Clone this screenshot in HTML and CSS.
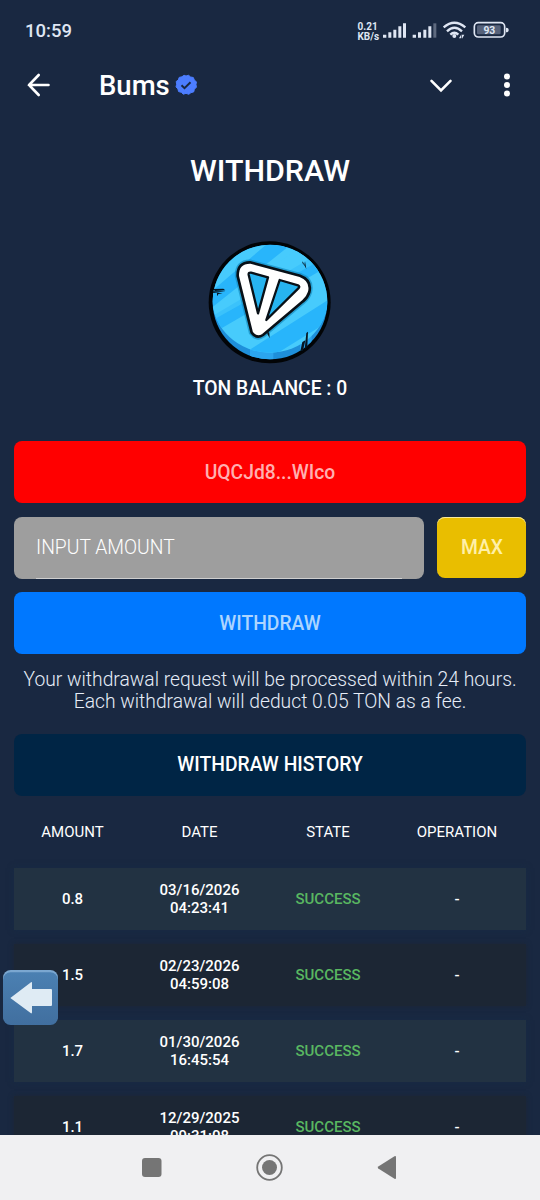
FILE: index.html
```html
<!DOCTYPE html>
<html lang="en">
<head>
<meta charset="utf-8">
<title>Bums - Withdraw</title>
<link rel="stylesheet" href="styles.css">
</head>
<body>
<div class="screen">
  <div class="status-bar">
    <span class="clock">10:59</span>
    <span class="net-speed"><span>0.21</span><span>KB/s</span></span>
    <svg class="status-icons" width="130" height="24" viewBox="0 0 390 72">
      <g fill="#dfe6f3">
        <path d="M3 44h10v9h-10zM19 37h9v16h-9zM34 29h9v24h-9zM49 19h9v34h-9zM63 10h9v43h-9z"/>
        <path d="M92 44h10v9h-10zM108 37h9v16h-9zM124 29h9v24h-9zM139 19h9v34h-9z"/>
        <path d="M154 10h9v43h-9z" opacity=".35"/>
        <circle cx="217" cy="48" r="6"/>
        <path d="M231 55l7-12v12zM240 44h7l-7 12z"/>
      </g>
      <g fill="none" stroke="#dfe6f3" stroke-width="7">
        <path d="M185 22Q217-6 250 22M195 34Q217 13 240 34M205 44Q217 32 229 44"/>
        <rect x="277" y="8" width="91" height="43" rx="12" stroke-width="5"/>
      </g>
      <rect x="285" y="16" width="71" height="27" rx="4" fill="#56627a"/>
      <path d="M372 23q8 0 8 7t-8 7z" fill="#dfe6f3"/>
      <text x="322" y="41" class="battery-level">93</text>
    </svg>
  </div>
  <header class="app-bar">
    <svg class="back" width="24" height="24" viewBox="0 0 24 24"><path d="M22.500 12H3M12.700 2L3 12l9.700 10"/></svg>
    <span class="app-name">Bums</span>
    <svg class="verified" width="22" height="22" viewBox="0 0 22 22">
      <path fill="#4c7dff" stroke="#4c7dff" stroke-width="1" stroke-linejoin="round" d="M11 2l2.600-.7 2 1.700 2.700.5 1 2.600 2.100 1.700-.4 2.800.4 2.600-2 2-.7 2.700-2.700.7-2.200 1.700-2.800-1-2.700.9-2-1.900-2.700-.7-.7-2.700-1.900-2 .7-2.700-.5-2.700L3.300 6 4.200 3.400l2.700-.6 2.200-1.500z"/>
      <path d="M6.500 11.300l3 2.900 6-6" fill="none" stroke="#192841" stroke-width="2"/>
    </svg>
    <svg class="collapse" width="24" height="24" viewBox="0 0 24 24"><path d="M2.500 7.800L12 17.300l9.500-9.500"/></svg>
    <svg class="more" width="8" height="24" viewBox="0 0 8 24"><circle cx="4" cy="3.500" r="3"/><circle cx="4" cy="12" r="3"/><circle cx="4" cy="20.500" r="3"/></svg>
  </header>
  <main class="content">
    <h1 class="title">WITHDRAW</h1>
    <svg class="coin" width="140" height="140" viewBox="0 0 420 420">
      <defs>
        <clipPath id="rim"><circle cx="210" cy="216" r="172"/></clipPath>
        <clipPath id="face"><ellipse cx="210" cy="206" rx="173" ry="162"/></clipPath>
      </defs>
      <circle cx="209" cy="217" r="183" fill="#020406"/>
      <g clip-path="url(#rim)">
        <path fill="#1e8fda" d="M0 0h420v420H0z"/>
        <path fill="#2ba5ee" d="M150 330h70v80h-70zM300 300h35v80h-35z"/>
        <g clip-path="url(#face)">
          <path fill="#47cbfc" d="M0 0h420v420H0z"/>
          <path fill="#28b5fb" d="M30 188L215 30h75L30 237zM30 262L390 50v55L30 315zM140 365L400 200v65L215 380z"/>
          <path fill="#47cbfc" d="M30 237L320 40l60 40L30 275z" opacity=".6"/>
        </g>
      </g>
      <path d="M150 97L300 137Q336 150 328 186Q323 203 309 214L189 315Q170 328 155 308L113 138Q112 97 150 97z" fill="#fff" stroke="#1389bd" stroke-opacity=".65" stroke-width="17"/>
      <path d="M150 97L300 137Q336 150 328 186Q323 203 309 214L189 315Q170 328 155 308L113 138Q112 97 150 97z" fill="#fff" stroke="#081017" stroke-width="8"/>
      <path d="M146 134Q145 127 153 128L204 142 174 250zM239 150L294 166Q301 169 295 175L199 270z" fill="#27b4f0" stroke="#081017" stroke-width="7" stroke-linejoin="round"/>
      <path d="M39 177l31-1 6 5-31 2zM37 184l40 0-37 5zM50 188l18 2-16 3zM51 192l4 1-3 6zM308 94l6 13-7-8zM315 94l4 23-6-11zM307 336l9-5-7 31-8 2zM319 309l5-4-2 45-8 8zM202 302l6 8 1 15-7-14z" fill="#071622"/>
    </svg>
    <div class="balance">TON BALANCE : 0</div>
    <div class="form">
      <div class="button wallet">UQCJd8...WIco</div>
      <div class="amount-row">
        <div class="input">INPUT AMOUNT</div>
        <div class="button max">MAX</div>
      </div>
      <div class="button submit">WITHDRAW</div>
    </div>
    <p class="note">Your withdrawal request will be processed within 24 hours.<br>Each withdrawal will deduct 0.05 TON as a fee.</p>
    <div class="button history-title">WITHDRAW HISTORY</div>
    <div class="history">
      <div class="row head"><span>AMOUNT</span><span>DATE</span><span>STATE</span><span>OPERATION</span></div>
      <div class="row light"><span>0.8</span><span>03/16/2026<br>04:23:41</span><span class="success">SUCCESS</span><span>-</span></div>
      <div class="row dark"><span>1.5</span><span>02/23/2026<br>04:59:08</span><span class="success">SUCCESS</span><span>-</span></div>
      <div class="row light"><span>1.7</span><span>01/30/2026<br>16:45:54</span><span class="success">SUCCESS</span><span>-</span></div>
      <div class="row dark"><span>1.1</span><span>12/29/2025<br>09:31:08</span><span class="success">SUCCESS</span><span>-</span></div>
    </div>
  </main>
  <svg class="float-back" width="56" height="56" viewBox="0 0 168 168">
    <defs><linearGradient id="tile" x1="0" y1="0" x2="0" y2="1"><stop offset="0" stop-color="#4b80b2"/><stop offset="1" stop-color="#416f9f"/></linearGradient></defs>
    <rect x="0" y="0" width="165" height="160" rx="23" fill="#7ba7d0"/>
    <rect x="0" y="7" width="165" height="158" rx="23" fill="url(#tile)"/>
    <path d="M22 84L84 37q3-2 3 2v18h57q3 0 3 3v45q0 3-3 3H87v19q0 4-3 3z" fill="#dfebf4"/>
  </svg>
  <nav class="nav-bar">
    <svg width="540" height="65" viewBox="0 0 540 65" fill="#757575">
      <rect x="142" y="23" width="19.500" height="19" rx="3"/>
      <circle cx="269.500" cy="32.500" r="12.300" fill="none" stroke="#757575" stroke-width="1.800"/>
      <circle cx="269.500" cy="32.500" r="7.500"/>
      <path d="M378.300 31.500L394.500 21.300q1.500-.8 1.500 1v20.500q0 1.800-1.500 1L378.300 33.500q-1.200-1 0-2z"/>
    </svg>
  </nav>
</div>
</body>
</html>
```
FILE: styles.css
```css
* { box-sizing: border-box; }
body { margin: 0; background: #192841; }
.screen {
  position: relative;
  width: 540px;
  height: 1200px;
  overflow: hidden;
  display: flex;
  flex-direction: column;
  background: #192841;
  color: #fff;
  font-family: Roboto, "Liberation Sans", sans-serif;
}
.status-bar {
  flex: none;
  height: 60px;
  display: flex;
  align-items: flex-start;
  padding: 20px 28px 0 25px;
  color: #dfe6f3;
}
.clock { font-size: 18.500px; line-height: 23px; font-weight: 500; flex: 1; }
.net-speed {
  display: flex;
  flex-direction: column;
  width: 24.500px;
  padding-top: 2px;
  font-size: 10px;
  line-height: 9.500px;
  font-weight: 700;
}
.status-icons { display: block; flex: none; }
.battery-level { font: 700 31px Roboto, sans-serif; fill: #dfe6f3; text-anchor: middle; }
.app-bar {
  flex: none;
  height: 62px;
  display: flex;
  align-items: center;
  padding: 0 29px 12px 26px;
}
.back, .collapse { fill: none; stroke: #fff; stroke-width: 2.600; stroke-linecap: round; }
.app-name { margin-left: 49px; padding-top: 1px; font-size: 27.500px; line-height: 32px; font-weight: 500; }
.verified { margin-left: 5.500px; }
.collapse { margin-left: auto; }
.more { margin-left: 50px; fill: #fff; }
.content { flex: 1; min-height: 0; overflow: hidden; padding: 0 14px; text-align: center; }
.title { margin: 29px 0 0; font-size: 30.400px; line-height: 40px; font-weight: 500; }
.coin { display: block; margin: 39px auto 0; }
.balance { margin-top: 7px; font-size: 19.300px; line-height: 24px; font-weight: 500; }
.form { margin-top: 40.400px; display: grid; gap: 13.500px; }
.button {
  height: 62px;
  display: flex;
  align-items: center;
  justify-content: center;
  border-radius: 8px;
  font-size: 19.300px;
  font-weight: 500;
}
.wallet { background: #f00; color: #ffb0b0; }
.amount-row { display: flex; gap: 13.300px; margin-right: -.4px; }
.input {
  flex: 1;
  height: 62px;
  padding: 0 22px;
  border-radius: 8px;
  background: linear-gradient(#cfcfcf, #cfcfcf) center bottom / calc(100% - 44px) 1px no-repeat #9e9e9e;
  font-size: 19.300px;
  line-height: 62px;
  font-weight: 300;
  text-align: left;
}
.max { width: 89px; height: 61px; background: #e9be00; color: #fff0a8; box-shadow: inset 0 1px #f8e99c; }
.submit { background: #0078ff; color: #add5ff; }
.note { margin: 14.500px -8px 0; font-size: 19.300px; line-height: 22.500px; font-weight: 340; color: #e6edf8; }
.history-title { margin-top: 20.100px; background: #002545; }
.history { display: grid; gap: 14px; }
.row {
  height: 62px;
  display: grid;
  grid-template-columns: 117px 137px 120px 138px;
  align-items: center;
  padding-top: 1.500px;
  font-size: 15px;
  line-height: 17.500px;
  font-weight: 500;
}
.head { height: 58px; padding-top: 15.500px; font-weight: 400; }
.light { background: #223242; box-shadow: 0 0 6px #172b45; }
.dark { background: #1c2634; box-shadow: 0 0 5px #1c2634; }
.success { color: #59b761; }
.float-back { position: absolute; left: 3px; top: 970px; }
.nav-bar { flex: none; height: 65px; background: #f0f0f2; }
.nav-bar svg { display: block; }
```
